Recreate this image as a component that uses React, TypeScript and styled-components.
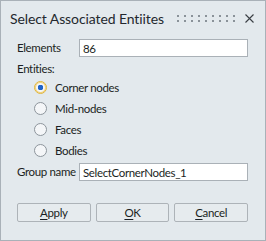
import styled, { createGlobalStyle } from "styled-components";

const Global = createGlobalStyle`
  html, body {
    margin: 0;
    padding: 0;
    background: #e3e9ed;
  }
  * {
    box-sizing: border-box;
  }
`;

interface Option {
  label: string;
  checked?: boolean;
}

const options: Option[] = [
  { label: "Corner nodes", checked: true },
  { label: "Mid-nodes" },
  { label: "Faces" },
  { label: "Bodies" }
];

const App = () => {
  return (
    <>
      <Global />
      <Dialog>
        <TitleBar>
          <Title>Select Associated Entiites</Title>
          <Grip>
            <svg width="58" height="7" viewBox="0 0 58 7">
              {Array.from({ length: 9 }).map((_, i) => (
                <g key={i} fill="#8a9299">
                  <rect x={i * 7} y={0} width="2" height="2" />
                  <rect x={i * 7} y={5} width="2" height="2" />
                </g>
              ))}
            </svg>
          </Grip>
          <Close>
            <svg width="9" height="9" viewBox="0 0 9 9">
              <path d="M0.5 0.5 L8.5 8.5 M8.5 0.5 L0.5 8.5" stroke="#3a3f44" strokeWidth="1.1" />
            </svg>
          </Close>
        </TitleBar>
        <Body>
          <FieldRow>
            <Label>Elements</Label>
            <Input defaultValue="86" />
          </FieldRow>
          <Label>Entities:</Label>
          <RadioList>
            {options.map((o) => (
              <RadioRow key={o.label}>
                <Radio $checked={o.checked} />
                <span>{o.label}</span>
              </RadioRow>
            ))}
          </RadioList>
          <FieldRow>
            <Label>Group name</Label>
            <Input defaultValue="SelectCornerNodes_1" />
          </FieldRow>
        </Body>
        <Buttons>
          <Button>
            <u>A</u>pply
          </Button>
          <Button>
            <u>O</u>K
          </Button>
          <Button>
            <u>C</u>ancel
          </Button>
        </Buttons>
      </Dialog>
    </>
  );
};

const Dialog = styled.div`
  width: 266px;
  height: 241px;
  border: 1px solid #a9b1b8;
  background: #e3e9ed;
  font-family: Lato, "Liberation Sans", sans-serif;
  font-size: 11.5px;
  letter-spacing: -0.35px;
  color: #1b1f23;
  display: flex;
  flex-direction: column;
`;

const TitleBar = styled.div`
  height: 34px;
  display: flex;
  align-items: center;
  padding: 0 11px 0 9px;
`;

const Title = styled.div`
  font-size: 14px;
  letter-spacing: -0.1px;
  color: #23282e;
  flex: 1;
  white-space: nowrap;
`;

const Grip = styled.div`
  display: flex;
  align-items: center;
  margin-right: 10px;
  line-height: 0;
`;

const Close = styled.div`
  line-height: 0;
`;

const Body = styled.div`
  padding: 4px 17px 0 16px;
  display: flex;
  flex-direction: column;
`;

const FieldRow = styled.div`
  display: flex;
  align-items: center;
  height: 18px;
  margin-bottom: 3px;
`;

const Label = styled.div`
  width: 62px;
  height: 18px;
  line-height: 18px;
  white-space: nowrap;
`;

const Input = styled.input`
  flex: 1;
  min-width: 0;
  height: 18px;
  border: 1px solid #aab1b7;
  background: #fff;
  font-family: inherit;
  font-size: 11.5px;
  letter-spacing: -0.35px;
  color: #1b1f23;
  padding: 0 3px;
  outline: none;
`;

const RadioList = styled.div`
  display: flex;
  flex-direction: column;
  padding-left: 17px;
  margin-top: -1px;
  margin-bottom: 2px;
`;

const RadioRow = styled.div`
  display: flex;
  align-items: center;
  gap: 8px;
  height: 21px;
`;

const Radio = styled.span<{ $checked?: boolean }>`
  width: 13px;
  height: 13px;
  border-radius: 50%;
  border: 1px solid ${(p) => (p.$checked ? "#e0b53c" : "#8d959c")};
  background: ${(p) =>
    p.$checked
      ? "radial-gradient(circle, #1f63c9 0 2.6px, #f4f6f8 3px)"
      : "#f4f6f8"};
  box-shadow: ${(p) => (p.$checked ? "inset 0 0 0 1px #f1d27c" : "none")};
`;

const Buttons = styled.div`
  margin-top: auto;
  display: grid;
  grid-template-columns: repeat(3, 1fr);
  gap: 5px;
  padding: 0 17px 18px 16px;
`;

const Button = styled.button`
  height: 19px;
  border: 1px solid #adb3b8;
  border-radius: 2px;
  background: #e6ebee;
  font-family: inherit;
  font-size: 11.5px;
  letter-spacing: -0.35px;
  color: #1b1f23;
  padding: 0;
  u {
    text-decoration-thickness: 1px;
    text-underline-offset: 2px;
  }
`;

export default App;
